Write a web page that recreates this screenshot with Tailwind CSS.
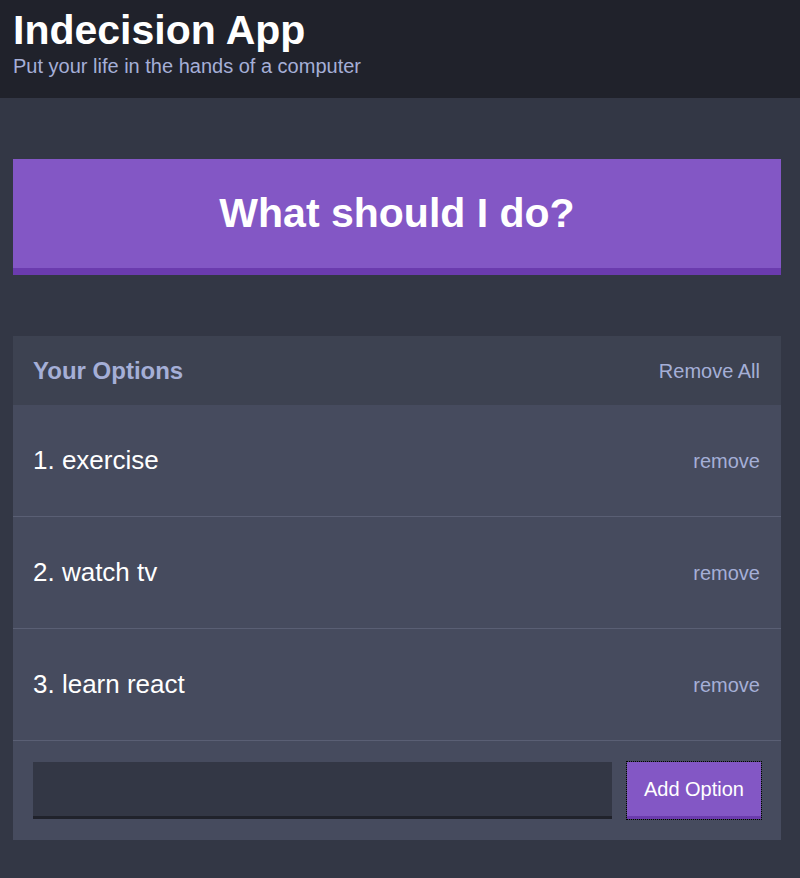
<!DOCTYPE html>
<html lang="en">
<head>
<meta charset="utf-8">
<meta name="viewport" content="width=device-width, initial-scale=1">
<title>Indecision App</title>
<script src="https://cdn.jsdelivr.net/npm/@tailwindcss/browser@4"></script>
</head>
<body class="min-h-screen bg-[#333745] font-['Liberation_Sans',Arial,sans-serif] text-white">
<header class="bg-[#20222b] px-[13px] pt-1.5 pb-5">
<h1 class="text-[41px] leading-[48px] font-bold">Indecision App</h1>
<p class="text-[20px] leading-6 text-[#a5afd7]">Put your life in the hands of a computer</p>
</header>
<main class="pt-[61px] pr-[19px] pb-[38px] pl-[13px]">
<button type="button" class="mb-[61px] block w-full border-b-[7px] border-[#6b3bae] bg-[#8357c5] py-[30px] text-[41px] leading-[49px] font-bold">What should I do?</button>
<section class="bg-[#464b5e]">
<div class="flex items-center justify-between bg-[#3d4251] py-5 pr-[21px] pl-5 text-[#a5afd7]">
<h2 class="text-[24px] leading-[29px] font-bold">Your Options</h2>
<button type="button" class="text-[20px] leading-6">Remove All</button>
</div>
<ol>
<li class="flex items-center justify-between border-b border-[#5a5f74] py-10 pr-[21px] pl-5"><span class="text-[26px] leading-[31px]">1. exercise</span><button type="button" class="text-[20px] leading-6 text-[#a5afd7]">remove</button></li>
<li class="flex items-center justify-between border-b border-[#5a5f74] py-10 pr-[21px] pl-5"><span class="text-[26px] leading-[31px]">2. watch tv</span><button type="button" class="text-[20px] leading-6 text-[#a5afd7]">remove</button></li>
<li class="flex items-center justify-between border-b border-[#5a5f74] py-10 pr-[21px] pl-5"><span class="text-[26px] leading-[31px]">3. learn react</span><button type="button" class="text-[20px] leading-6 text-[#a5afd7]">remove</button></li>
</ol>
<form class="flex gap-[15px] px-5 py-[21px]">
<input type="text" name="option" aria-label="New option" class="h-[57px] min-w-0 grow border-b-[3px] border-[#20222b] bg-[#333745] px-2.5 text-[20px] outline-none">
<button type="submit" class="h-[57px] border-b-[3px] border-[#6b3bae] bg-[#8357c5] px-[17px] text-[20px] leading-6 outline outline-dotted outline-black">Add Option</button>
</form>
</section>
</main>
</body>
</html>
